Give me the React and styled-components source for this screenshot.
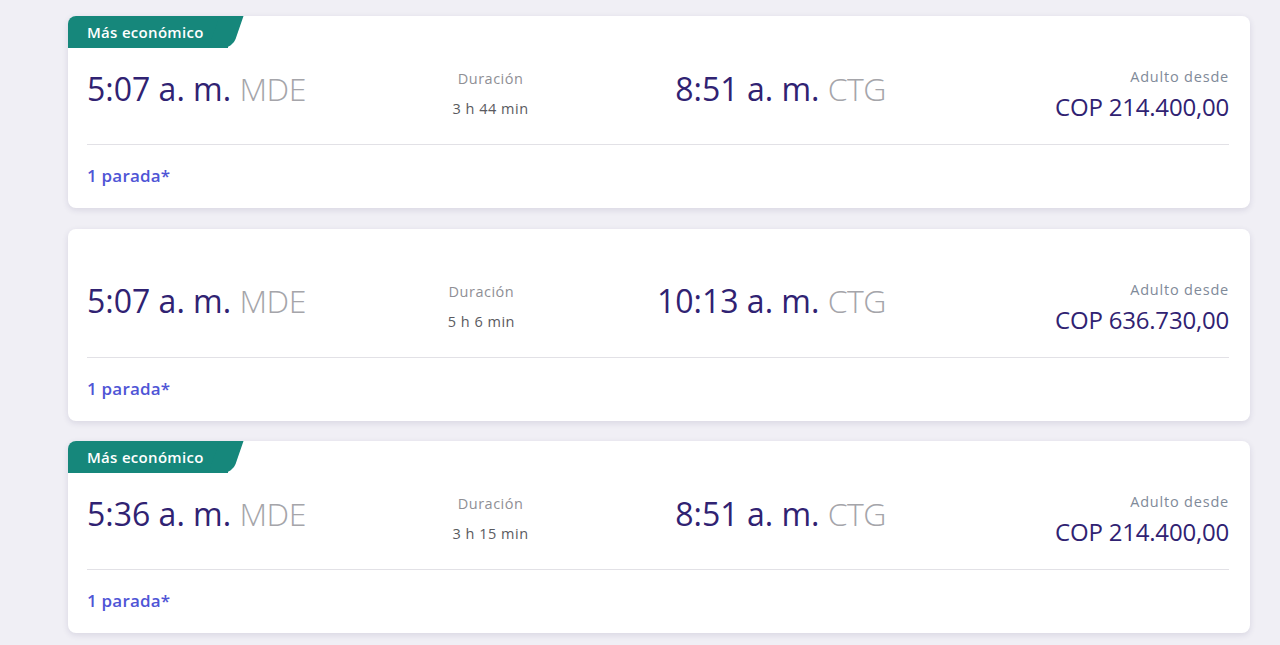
import React from "react";
import styled, { createGlobalStyle } from "styled-components";

const Global = createGlobalStyle`
  html, body { margin: 0; padding: 0; background: #f0eff5; }
  body { font-family: "Open Sans", "Noto Sans", sans-serif; -webkit-font-smoothing: antialiased; }
`;

const Page = styled.div`
  padding: 16px 30px 20px 68px;
  display: flex;
  flex-direction: column;
  gap: 20.5px;
`;

const Card = styled.div`
  background: #fff;
  border-radius: 8px;
  box-shadow: 0 2px 6px rgba(40, 30, 90, 0.12);
  display: flex;
  flex-direction: column;
`;

const Header = styled.div`
  height: 32px;
  display: flex;
  align-items: stretch;
`;

const Badge = styled.div`
  position: relative;
  display: flex;
  align-items: center;
  background: #16877b;
  color: #fff;
  font-size: 15px;
  font-weight: 600;
  letter-spacing: 0.3px;
  padding: 0 24px 0 19px;
  border-top-left-radius: 8px;
  z-index: 0;
  &::after {
    content: "";
    position: absolute;
    top: 0;
    right: -10px;
    width: 24px;
    height: 100%;
    background: #16877b;
    transform: skewX(-19deg);
    border-bottom-right-radius: 9px;
    z-index: -1;
  }
`;

const Body = styled.div`
  padding: 0 21px 0 19px;
`;

const Main = styled.div`
  height: 96px;
  display: flex;
  align-items: center;
  border-bottom: 1px solid #e2e1e6;
`;

const Flight = styled.div`
  width: 799px;
  display: flex;
  align-items: center;
  justify-content: space-between;
  margin-top: -4px;
`;

const Time = styled.div`
  font-size: 32px;
  color: #302272;
  white-space: nowrap;
  letter-spacing: 0;
  margin-bottom: 12px;
`;

const Airport = styled.span`
  color: #a5a5aa;
  font-weight: 300;
  letter-spacing: -0.5px;
`;

const Duration = styled.div`
  display: flex;
  flex-direction: column;
  align-items: center;
  gap: 8px;
  font-size: 14.5px;
  line-height: 22px;
  letter-spacing: 0.5px;
`;

const DurLabel = styled.span`
  color: #8f8f95;
`;

const DurValue = styled.span`
  color: #5a5a60;
`;

const Price = styled.div`
  margin-left: auto;
  display: flex;
  flex-direction: column;
  align-items: flex-end;
  gap: 4px;
  margin-top: -4px;
`;

const PriceLabel = styled.span`
  font-size: 14.5px;
  line-height: 22px;
  color: #7f8a99;
  letter-spacing: 0.8px;
`;

const Amount = styled.span`
  font-size: 24px;
  line-height: 30px;
  color: #302272;
  letter-spacing: -0.2px;
`;

const Footer = styled.div`
  height: 63px;
  display: flex;
  align-items: center;
`;

const Stops = styled.span`
  font-size: 17px;
  font-weight: 600;
  color: #4f55d6;
  letter-spacing: 0.2px;
  margin-top: -2px;
`;

const flights = [
  { badge: true, dep: "5:07 a. m.", from: "MDE", dur: "3 h 44 min", arr: "8:51 a. m.", to: "CTG", price: "COP 214.400,00" },
  { badge: false, dep: "5:07 a. m.", from: "MDE", dur: "5 h 6 min", arr: "10:13 a. m.", to: "CTG", price: "COP 636.730,00" },
  { badge: true, dep: "5:36 a. m.", from: "MDE", dur: "3 h 15 min", arr: "8:51 a. m.", to: "CTG", price: "COP 214.400,00" },
];

export default function App() {
  return (
    <>
      <Global />
      <Page>
        {flights.map((f, i) => (
          <Card key={i}>
            <Header>{f.badge && <Badge>Más económico</Badge>}</Header>
            <Body>
              <Main>
                <Flight>
                  <Time>
                    {f.dep} <Airport>{f.from}</Airport>
                  </Time>
                  <Duration>
                    <DurLabel>Duración</DurLabel>
                    <DurValue>{f.dur}</DurValue>
                  </Duration>
                  <Time>
                    {f.arr} <Airport>{f.to}</Airport>
                  </Time>
                </Flight>
                <Price>
                  <PriceLabel>Adulto desde</PriceLabel>
                  <Amount>{f.price}</Amount>
                </Price>
              </Main>
              <Footer>
                <Stops>1 parada*</Stops>
              </Footer>
            </Body>
          </Card>
        ))}
      </Page>
    </>
  );
}
